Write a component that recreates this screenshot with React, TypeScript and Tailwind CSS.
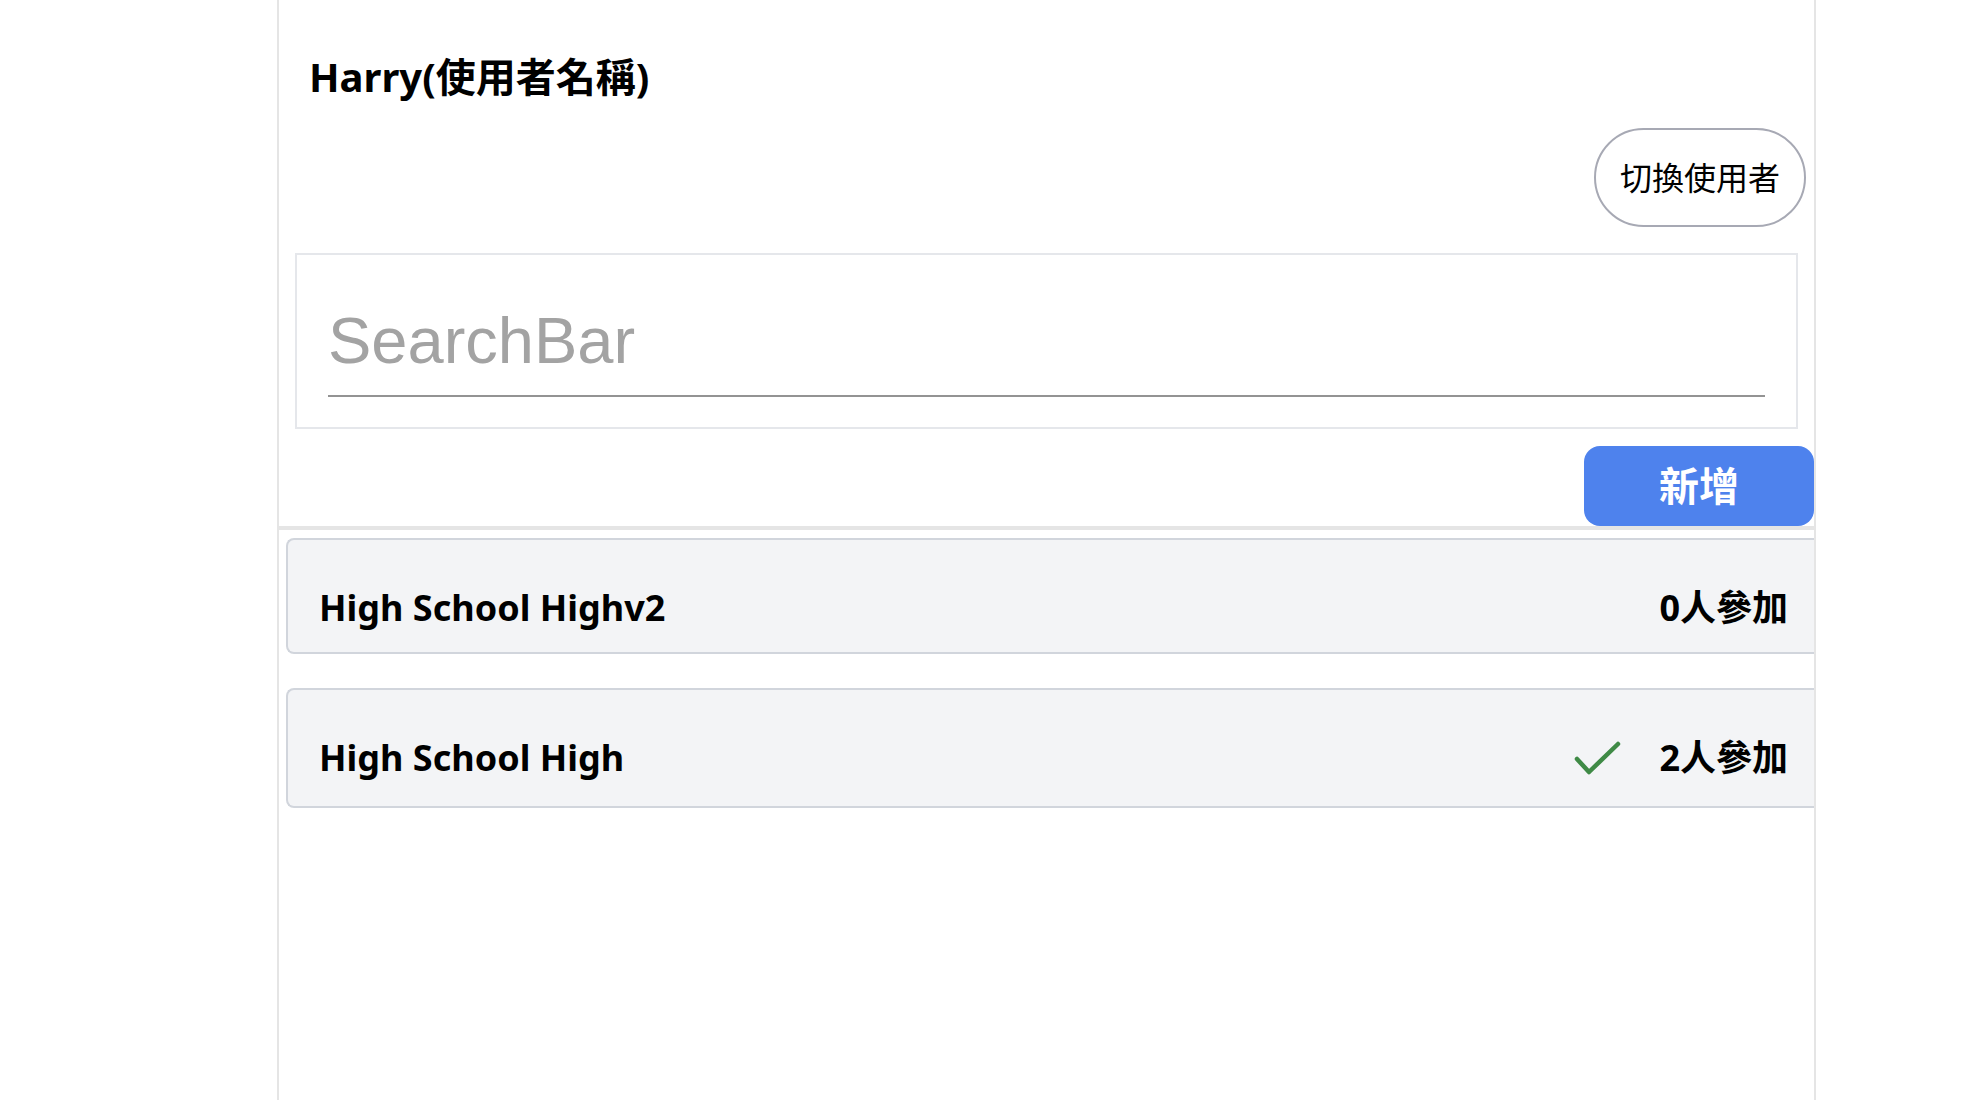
import React from 'react';

type Group = { name: string; count: number; joined: boolean };

const groups: Group[] = [
  { name: 'High School Highv2', count: 0, joined: false },
  { name: 'High School High', count: 2, joined: true },
];

const font = "font-['Noto_Sans','Noto_Sans_CJK_TC',sans-serif]";

const Check = () => (
  <svg width="48" height="36" viewBox="0 0 48 36" fill="none" className="block">
    <polyline
      points="3,19 15,32 44,4"
      stroke="#3f8a46"
      strokeWidth="4.5"
      strokeLinecap="round"
      strokeLinejoin="round"
    />
  </svg>
);

const GroupRow = ({ group }: { group: Group }) => (
  <div
    className={`ml-[7px] flex items-center justify-between rounded-l-lg border-2 border-r-0 border-gray-300 bg-gray-100 pl-[31px] pr-[26px] pt-[43px] ${
      group.joined ? 'pb-[23px]' : 'pb-[19px]'
    }`}
  >
    <h3 className="text-[36px] font-bold leading-[50px] text-black">{group.name}</h3>
    <div className="flex items-center gap-[37px]">
      {group.joined && <Check />}
      <span className="text-[36px] font-bold leading-[50px] text-black">{group.count}人參加</span>
    </div>
  </div>
);

export default function App() {
  return (
    <div className={`min-h-[1100px] bg-white ${font}`}>
      <div className="ml-[277px] min-h-[1100px] w-[1539px] overflow-hidden border-x-2 border-[#e5e5e5]">
        <div className="pt-[50px] pl-[30px]">
          <h1 className="text-[40px] font-bold leading-[54px] text-black">Harry(使用者名稱)</h1>
        </div>
        <div className="mt-[24px] flex justify-end pr-2">
          <button className="h-[99px] w-[212px] rounded-full border-2 border-[#a7a9b4] bg-white text-[32px] text-black">
            切換使用者
          </button>
        </div>
        <div className="mx-4 mt-[26px] border-2 border-[#e5e7eb] px-[31px] pt-[49px] pb-[30px]">
          <div className="border-b-2 border-[#939393] pb-[17px]">
            <input
              type="text"
              placeholder="SearchBar"
              className="block h-[74px] w-full bg-transparent font-['Liberation_Sans',Arial,sans-serif] text-[65px] leading-[74px] text-black outline-none placeholder:text-[#a3a3a3]"
            />
          </div>
        </div>
        <div className="mt-[17px] flex justify-end">
          <button className="h-[80px] w-[230px] rounded-[16px] bg-[#4e82ed] text-[40px] font-bold text-white">
            新增
          </button>
        </div>
        <div className="h-[4px] bg-[#e5e5e5]" />
        <div className="mt-[8px] flex flex-col gap-[34px]">
          {groups.map((g, i) => (
            <GroupRow key={i} group={g} />
          ))}
        </div>
      </div>
    </div>
  );
}
